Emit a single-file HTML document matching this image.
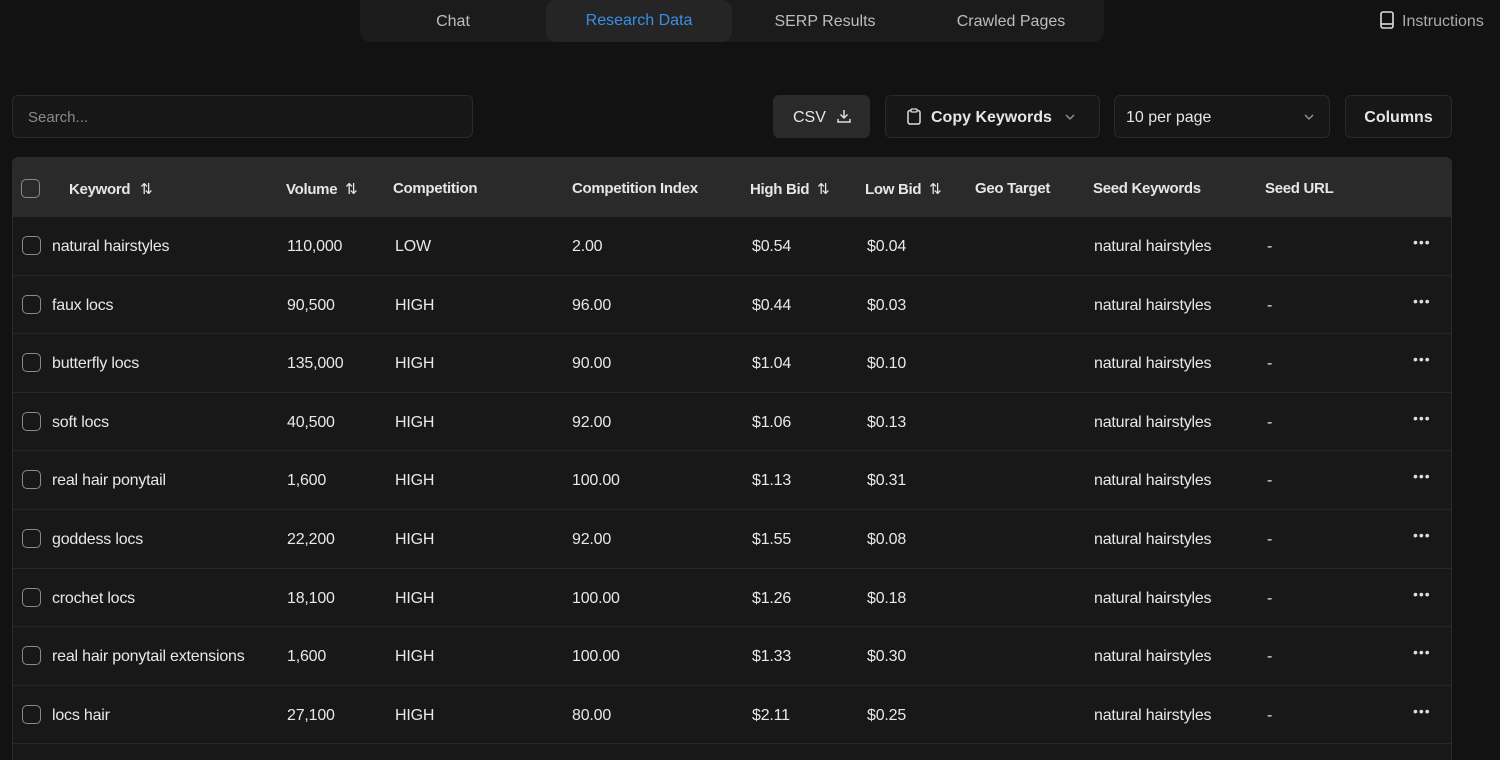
<!DOCTYPE html>
<html><head><meta charset="utf-8"><style>
*{box-sizing:border-box;margin:0;padding:0}
html,body{width:1500px;height:760px;overflow:hidden}
body{background:#121212;font-family:"Liberation Sans",sans-serif;color:#e6e6e6;position:relative}
.abs{position:absolute}
.tabs{left:360px;top:0;width:744px;height:42px;background:#1b1b1b;border-radius:0 0 10px 10px}
.tab{top:1px;height:42px;line-height:42px;font-size:16px;color:#bdbdbd;text-align:center;width:186px}
.tab.act{top:0;background:#252525;color:#3b8ee8;border-radius:10px}
.btn{top:95px;height:43px;border:1px solid #2a2a2a;border-radius:6px;background:#171717;font-size:16px;line-height:43px;color:#e6e6e6}
.table{left:12px;top:157px;width:1440px;height:603px;background:#181818;border:1px solid #2a2a2a;border-bottom:none;border-radius:6px 6px 0 0;overflow:hidden}
.head{left:0;top:0;width:1440px;height:59px;background:#2a2a2a}
.th{top:22px;font-size:15px;font-weight:bold;color:#e6e6e6;white-space:nowrap;letter-spacing:-0.3px}
.row{left:0;width:1440px;height:58.6px;border-bottom:1px solid #262626}
.td{font-size:16px;color:#e8e8e8;white-space:nowrap;letter-spacing:-0.2px}
.cb{width:19px;height:19px;border:1.5px solid #8a8a8a;border-radius:5px}
.dots{font-size:14px;color:#ddd;letter-spacing:1px}
</style></head><body>
<div class="abs tabs">
<div class="abs tab" style="left:0">Chat</div>
<div class="abs tab act" style="left:186px">Research Data</div>
<div class="abs tab" style="left:372px">SERP Results</div>
<div class="abs tab" style="left:558px">Crawled Pages</div>
</div>
<div class="abs" style="left:1380px;top:11px;font-size:16px;color:#aaa;line-height:20px">
<svg width="14" height="18" viewBox="0 0 14 18" style="vertical-align:-3px;margin-right:8px"><rect x="1" y="1" width="12" height="16" rx="2" fill="none" stroke="#ddd" stroke-width="1.6"/><line x1="1" y1="13" x2="13" y2="13" stroke="#ddd" stroke-width="1.6"/></svg>Instructions</div>

<div class="abs btn" style="left:12px;width:461px;padding-left:15px;color:#8a8a8a;font-size:15px">Search...</div>
<div class="abs btn" style="left:773px;width:97px;background:#2a2a2a;border-color:#2a2a2a;padding-left:19px">CSV <svg width="16" height="16" viewBox="0 0 16 16" style="vertical-align:-2px;margin-left:6px"><path d="M8 2v8M4.5 6.5 8 10l3.5-3.5M2 11v3h12v-3" fill="none" stroke="#ddd" stroke-width="1.5"/></svg></div>
<div class="abs btn" style="left:885px;width:215px;padding-left:21px;font-weight:bold"><svg width="14" height="17" viewBox="0 0 14 17" style="vertical-align:-3px;margin-right:10px"><rect x="1" y="2.5" width="12" height="13.5" rx="2" fill="none" stroke="#ddd" stroke-width="1.5"/><rect x="4" y="1" width="6" height="3" rx="1" fill="#171717" stroke="#ddd" stroke-width="1.3"/></svg>Copy Keywords<svg width="12" height="8" viewBox="0 0 12 8" style="margin-left:12px;vertical-align:1px"><path d="M2 2l4 4 4-4" fill="none" stroke="#999" stroke-width="1.3"/></svg></div>
<div class="abs btn" style="left:1114px;width:216px;padding-left:11px">10 per page<svg width="12" height="8" viewBox="0 0 12 8" style="position:absolute;right:14px;top:17px"><path d="M2 2l4 4 4-4" fill="none" stroke="#999" stroke-width="1.3"/></svg></div>
<div class="abs btn" style="left:1345px;width:107px;text-align:center;font-weight:bold">Columns</div>

<div class="abs table">
<div class="abs head">
<div class="abs cb" style="left:8px;top:21px"></div>
<div class="abs th" style="left:56px">Keyword <span style="font-weight:normal;margin-left:6px">⇅</span></div>
<div class="abs th" style="left:273px">Volume <span style="font-weight:normal;margin-left:4px">⇅</span></div>
<div class="abs th" style="left:380px">Competition</div>
<div class="abs th" style="left:559px">Competition Index</div>
<div class="abs th" style="left:737px">High Bid <span style="font-weight:normal;margin-left:4px">⇅</span></div>
<div class="abs th" style="left:852px">Low Bid <span style="font-weight:normal;margin-left:4px">⇅</span></div>
<div class="abs th" style="left:962px">Geo Target</div>
<div class="abs th" style="left:1080px">Seed Keywords</div>
<div class="abs th" style="left:1252px">Seed URL</div>
</div>
<div id="rows"></div>
</div>
<script>
var d=[["natural hairstyles","110,000","LOW","2.00","$0.54","$0.04"],["faux locs","90,500","HIGH","96.00","$0.44","$0.03"],["butterfly locs","135,000","HIGH","90.00","$1.04","$0.10"],["soft locs","40,500","HIGH","92.00","$1.06","$0.13"],["real hair ponytail","1,600","HIGH","100.00","$1.13","$0.31"],["goddess locs","22,200","HIGH","92.00","$1.55","$0.08"],["crochet locs","18,100","HIGH","100.00","$1.26","$0.18"],["real hair ponytail extensions","1,600","HIGH","100.00","$1.33","$0.30"],["locs hair","27,100","HIGH","80.00","$2.11","$0.25"]];
var h="";
d.forEach(function(r,i){var t=59+i*58.6;var c=t+21;
h+='<div class="abs row" style="top:'+t+'px"></div>';
h+='<div class="abs cb" style="left:9px;top:'+(t+19)+'px"></div>';
var xs=[39,274,382,559,739,854];
r.forEach(function(v,j){h+='<div class="abs td" style="left:'+xs[j]+'px;top:'+(c)+'px">'+v+'</div>'});
h+='<div class="abs td" style="left:1081px;top:'+c+'px">natural hairstyles</div>';
h+='<div class="abs td" style="left:1254px;top:'+c+'px">-</div>';
h+='<div class="abs dots" style="left:1400px;top:'+(c-4)+'px">•••</div>';
});
document.getElementById("rows").innerHTML=h;
</script>
</body></html>
